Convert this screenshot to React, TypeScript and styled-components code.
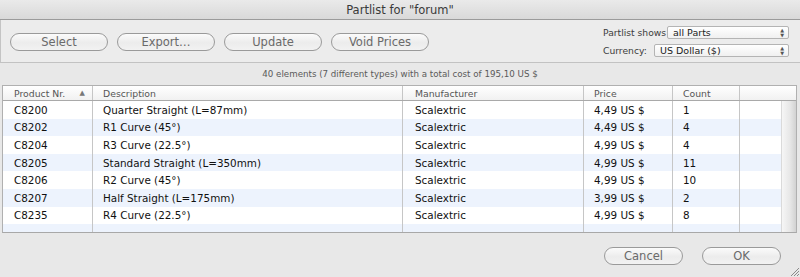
import React from "react";
import styled, { createGlobalStyle } from "styled-components";

const GlobalStyle = createGlobalStyle`
  html, body {
    margin: 0;
    padding: 0;
    background: #e8e8e8;
  }
  body {
    font-family: "DejaVu Sans", "Liberation Sans", sans-serif;
    color: #222;
  }
`;

const Window = styled.div`
  position: relative;
  width: 800px;
  height: 277px;
  display: flex;
  flex-direction: column;
  background: #e8e8e8;
  overflow: hidden;
`;

const TitleBar = styled.div`
  height: 19px;
  display: flex;
  align-items: center;
  justify-content: center;
  background: linear-gradient(#eaeaea, #d9d9d9);
  border-bottom: 1px solid #9b9b9b;
  font-size: 11.5px;
  color: #3a3a3a;
`;

const Toolbar = styled.div`
  height: 42px;
  display: flex;
  align-items: center;
  justify-content: space-between;
  padding: 0 11px 0 9px;
  border-left: 1px solid #c4c4c4;
  border-bottom: 1px solid #c2c2c2;
  background: #ececec;
`;

const ButtonGroup = styled.div`
  display: flex;
  gap: 9px;
  padding-top: 2px;
`;

const PillButton = styled.div<{ $width: number }>`
  width: ${(p) => p.$width}px;
  height: 18px;
  box-sizing: border-box;
  border: 1px solid #9a9a9a;
  border-radius: 9px;
  background: linear-gradient(#fbfbfb, #ececec 55%, #f2f2f2);
  display: flex;
  align-items: center;
  justify-content: center;
  font-size: 11.5px;
  color: #6a6a6a;
`;

const Options = styled.div`
  display: flex;
  flex-direction: column;
  gap: 5px;
  width: 186px;
`;

const OptionRow = styled.div`
  display: flex;
  align-items: center;
  justify-content: space-between;
`;

const OptionLabel = styled.span`
  font-size: 9.2px;
  color: #3c3c3c;
  white-space: nowrap;
`;

const SelectBox = styled.div<{ $width: number }>`
  width: ${(p) => p.$width}px;
  height: 13px;
  box-sizing: border-box;
  border: 1px solid #b4b4b4;
  border-radius: 2px;
  background: linear-gradient(#ffffff, #f0f0f0);
  display: flex;
  align-items: center;
  justify-content: space-between;
  padding: 0 4px 0 5px;
  font-size: 9.5px;
  color: #222;
`;

const Stepper = styled.span`
  display: flex;
  flex-direction: column;
  gap: 1px;
  font-size: 5px;
  line-height: 4px;
  color: #555;
`;

const Status = styled.div`
  height: 20px;
  display: flex;
  align-items: center;
  justify-content: center;
  font-size: 8.7px;
  color: #5a5a5a;
  padding-top: 1px;
`;

const Table = styled.div`
  margin: 1px 3px 0 2px;
  height: 146px;
  border: 1px solid #b0b0b0;
  border-bottom-color: #a8a8a8;
  background: #fff;
  display: flex;
  flex-direction: column;
  overflow: hidden;
`;

const HeaderRow = styled.div`
  height: 14px;
  display: flex;
  background: linear-gradient(#ffffff, #f1f1f1);
  border-bottom: 1px solid #a9a9a9;
`;

const HeaderCell = styled.div<{ $w: number; $pad?: number }>`
  width: ${(p) => p.$w}px;
  flex: none;
  box-sizing: border-box;
  padding-left: ${(p) => p.$pad ?? 10}px;
  border-right: 1px solid #c6c6c6;
  display: flex;
  align-items: center;
  justify-content: space-between;
  font-size: 9.3px;
  color: #555;
  &:last-child {
    border-right: none;
    flex: 1;
  }
`;

const SortArrow = styled.span`
  font-size: 7px;
  color: #777;
  margin-right: 7px;
`;

const Body = styled.div`
  flex: 1;
  display: flex;
  min-height: 0;
`;

const Rows = styled.div`
  flex: 1;
  display: flex;
  flex-direction: column;
`;

const Row = styled.div<{ $alt: boolean }>`
  height: 17.6px;
  flex: none;
  display: flex;
  background: ${(p) => (p.$alt ? "#edf3fd" : "#ffffff")};
`;

const Cell = styled.div<{ $w: number; $pad?: number }>`
  width: ${(p) => p.$w}px;
  flex: none;
  box-sizing: border-box;
  padding-left: ${(p) => p.$pad ?? 10}px;
  border-right: 1px solid #c6c6c6;
  display: flex;
  align-items: center;
  font-size: 10.4px;
  color: #111;
  white-space: nowrap;
  &:last-child {
    border-right: none;
    flex: 1;
  }
`;

const Scroller = styled.div`
  width: 14px;
  flex: none;
  background: linear-gradient(90deg, #f6f6f6, #e6e6e6 60%, #d2d2d2);
  border-left: 1px solid #dadada;
`;

const Footer = styled.div`
  flex: 1;
  display: flex;
  justify-content: flex-end;
  align-items: flex-start;
  gap: 19px;
  padding: 14px 19px 0 0;
`;

const Grip = styled.svg`
  position: absolute;
  right: 0;
  bottom: 0;
`;

const columns = [
  { w: 90, pad: 11 },
  { w: 310, pad: 10 },
  { w: 181, pad: 12 },
  { w: 89, pad: 10 },
  { w: 67, pad: 10 },
  { w: 0, pad: 0 },
];

const headers = ["Product Nr.", "Description", "Manufacturer", "Price", "Count", ""];

const parts = [
  ["C8200", "Quarter Straight (L=87mm)", "Scalextric", "4,49 US $", "1"],
  ["C8202", "R1 Curve (45°)", "Scalextric", "4,49 US $", "4"],
  ["C8204", "R3 Curve (22.5°)", "Scalextric", "4,99 US $", "4"],
  ["C8205", "Standard Straight (L=350mm)", "Scalextric", "4,99 US $", "11"],
  ["C8206", "R2 Curve (45°)", "Scalextric", "4,99 US $", "10"],
  ["C8207", "Half Straight (L=175mm)", "Scalextric", "3,99 US $", "2"],
  ["C8235", "R4 Curve (22.5°)", "Scalextric", "4,99 US $", "8"],
  ["", "", "", "", ""],
];

export default function App() {
  return (
    <>
      <GlobalStyle />
      <Window>
        <TitleBar>Partlist for "forum"</TitleBar>
        <Toolbar>
          <ButtonGroup>
            <PillButton $width={98}>Select</PillButton>
            <PillButton $width={98}>Export…</PillButton>
            <PillButton $width={98}>Update</PillButton>
            <PillButton $width={98}>Void Prices</PillButton>
          </ButtonGroup>
          <Options>
            <OptionRow>
              <OptionLabel>Partlist shows</OptionLabel>
              <SelectBox $width={122}>
                all Parts
                <Stepper>
                  <span>▲</span>
                  <span>▼</span>
                </Stepper>
              </SelectBox>
            </OptionRow>
            <OptionRow>
              <OptionLabel>Currency:</OptionLabel>
              <SelectBox $width={135}>
                US Dollar ($)
                <Stepper>
                  <span>▲</span>
                  <span>▼</span>
                </Stepper>
              </SelectBox>
            </OptionRow>
          </Options>
        </Toolbar>
        <Status>40 elements (7 different types) with a total cost of 195,10 US $</Status>
        <Table>
          <HeaderRow>
            {headers.map((h, i) => (
              <HeaderCell key={i} $w={columns[i].w} $pad={columns[i].pad}>
                {h}
                {i === 0 && <SortArrow>▲</SortArrow>}
              </HeaderCell>
            ))}
          </HeaderRow>
          <Body>
            <Rows>
              {parts.map((row, r) => (
                <Row key={r} $alt={r % 2 === 1}>
                  {[...row, ""].map((v, i) => (
                    <Cell key={i} $w={columns[i].w} $pad={columns[i].pad}>
                      {v}
                    </Cell>
                  ))}
                </Row>
              ))}
            </Rows>
            <Scroller />
          </Body>
        </Table>
        <Footer>
          <PillButton $width={79}>Cancel</PillButton>
          <PillButton $width={79}>OK</PillButton>
        </Footer>
        <Grip width="12" height="12" viewBox="0 0 12 12">
          <path d="M11 3 L3 11 M11 6 L6 11 M11 9 L9 11" stroke="#8a8a8a" strokeWidth="1" />
        </Grip>
      </Window>
    </>
  );
}
